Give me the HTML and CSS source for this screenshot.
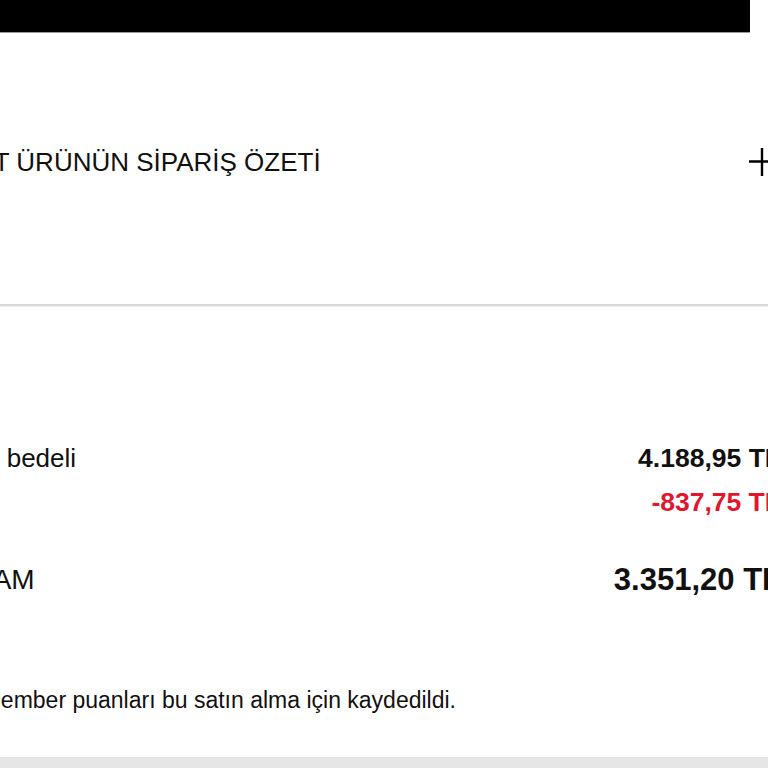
FILE: index.html
```html
<!DOCTYPE html>
<html lang="tr">
<head>
<meta charset="utf-8">
<title>Sipariş özeti</title>
<link rel="stylesheet" href="styles.css">
</head>
<body>
<div class="viewport">
  <div class="page">
    <div class="btn-bar"></div>
    <div class="summary-head">
      <h2 class="summary-title">1 ADET ÜRÜNÜN SİPARİŞ ÖZETİ</h2>
      <svg class="plus" width="26" height="28" viewBox="0 0 26 28" aria-hidden="true">
        <path d="M13 0V28M0 13.5H26" stroke="#000" stroke-width="2.4" fill="none"/>
      </svg>
    </div>
    <div class="divider"></div>
    <div class="lines">
      <div class="row">
        <span class="label">Sipariş bedeli</span>
        <span class="value">4.188,95 TL</span>
      </div>
      <div class="row">
        <span class="label">Kupon</span>
        <span class="value discount">-837,75 TL</span>
      </div>
      <div class="row total">
        <span class="label">TOPLAM</span>
        <span class="value">3.351,20 TL</span>
      </div>
      <p class="note">Club Member puanları bu satın alma için kaydedildi.</p>
    </div>
    <div class="band"></div>
  </div>
</div>
</body>
</html>
```

FILE: styles.css
```css
html, body {
  margin: 0;
  padding: 0;
  background: #fff;
}
body {
  font-family: "Liberation Sans", Arial, sans-serif;
  color: #111;
  overflow: hidden;
}
.viewport {
  width: 768px;
  height: 768px;
  overflow: hidden;
}
.page {
  margin-left: -80px;
  width: 861px;
}
.btn-bar {
  width: 830px;
  height: 32px;
  background: #000;
  border-bottom: 1px solid #9a9a9a;
}
.summary-head {
  display: flex;
  justify-content: space-between;
  align-items: center;
  height: 60px;
  margin-top: 99px;
  margin-bottom: 112px;
}
.summary-title {
  margin: 0;
  font-size: 26px;
  font-weight: 400;
  color: #111;
  letter-spacing: 0;
}
.plus {
  display: block;
  margin-right: 6px;
}
.divider {
  height: 2px;
  background: #d8d8d8;
  border-bottom: 1px solid #f0f0f0;
}
.lines {
  padding-top: 133px;
  display: flex;
  flex-direction: column;
}
.row {
  display: flex;
  justify-content: space-between;
  align-items: center;
  height: 36px;
  margin-bottom: 8px;
}
.label {
  font-size: 26px;
  color: #111;
}
.value {
  font-size: 26.5px;
  font-weight: 700;
  color: #111;
}
.discount {
  color: #e3162d;
}
.row.total {
  height: 44px;
  margin-top: 30px;
  margin-bottom: 0;
}
.total .label {
  font-size: 28px;
}
.total .value {
  font-size: 31px;
}
.note {
  margin: 83px 0 0;
  padding-left: 8px;
  height: 30px;
  line-height: 30px;
  font-size: 23px;
  color: #111;
}
.band {
  margin-top: 42px;
  height: 20px;
  background: #e6e6e6;
}
```
